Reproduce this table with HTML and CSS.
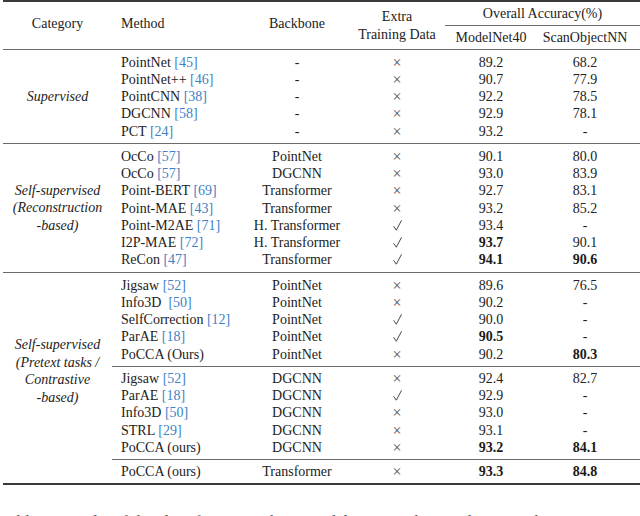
FILE: index.html
```html
<!DOCTYPE html>
<html>
<head>
<meta charset="utf-8">
<link rel="stylesheet" href="styles.css">
</head>
<body>
<table class="results">
  <colgroup>
    <col class="c-cat"><col class="c-method"><col class="c-bb"><col class="c-extra"><col class="c-mn"><col class="c-so">
  </colgroup>
  <thead>
    <tr class="h1">
      <th rowspan="2" class="top bot hi">Category</th>
      <th rowspan="2" class="top bot left hi">Method</th>
      <th rowspan="2" class="top bot hi">Backbone</th>
      <th rowspan="2" class="top bot extra">Extra<br>Training Data</th>
      <th colspan="2" class="top cmid">Overall Accuracy(%)</th>
    </tr>
    <tr class="h2">
      <th class="bot">ModelNet40</th>
      <th class="bot so">ScanObjectNN</th>
    </tr>
  </thead>
  <tbody class="g g1">
    <tr class="first"><td rowspan="5" class="cat">Supervised</td><td class="left">PointNet <span class="ref">[45]</span></td><td>-</td><td class="x">×</td><td>89.2</td><td class="so">68.2</td></tr>
    <tr><td class="left">PointNet++ <span class="ref">[46]</span></td><td>-</td><td class="x">×</td><td>90.7</td><td class="so">77.9</td></tr>
    <tr><td class="left">PointCNN <span class="ref">[38]</span></td><td>-</td><td class="x">×</td><td>92.2</td><td class="so">78.5</td></tr>
    <tr><td class="left">DGCNN <span class="ref">[58]</span></td><td>-</td><td class="x">×</td><td>92.9</td><td class="so">78.1</td></tr>
    <tr class="last"><td class="left">PCT <span class="ref">[24]</span></td><td>-</td><td class="x">×</td><td>93.2</td><td class="so">-</td></tr>
  </tbody>
  <tbody class="g g2">
    <tr class="first"><td rowspan="7" class="cat">Self-supervised<br>(Reconstruction<br>-based)</td><td class="left">OcCo <span class="ref">[57]</span></td><td>PointNet</td><td class="x">×</td><td>90.1</td><td class="so">80.0</td></tr>
    <tr><td class="left">OcCo <span class="ref">[57]</span></td><td>DGCNN</td><td class="x">×</td><td>93.0</td><td class="so">83.9</td></tr>
    <tr><td class="left">Point-BERT <span class="ref">[69]</span></td><td>Transformer</td><td class="x">×</td><td>92.7</td><td class="so">83.1</td></tr>
    <tr><td class="left">Point-MAE <span class="ref">[43]</span></td><td>Transformer</td><td class="x">×</td><td>93.2</td><td class="so">85.2</td></tr>
    <tr><td class="left">Point-M2AE <span class="ref">[71]</span></td><td>H. Transformer</td><td class="ck"><svg class="tick" viewBox="0 0 9 11"><path d="M0.8 6.6 L3.3 10.2 L8.4 0.6"/></svg></td><td>93.4</td><td class="so">-</td></tr>
    <tr><td class="left">I2P-MAE <span class="ref">[72]</span></td><td>H. Transformer</td><td class="ck"><svg class="tick" viewBox="0 0 9 11"><path d="M0.8 6.6 L3.3 10.2 L8.4 0.6"/></svg></td><td><b>93.7</b></td><td class="so">90.1</td></tr>
    <tr class="last"><td class="left">ReCon <span class="ref">[47]</span></td><td>Transformer</td><td class="ck"><svg class="tick" viewBox="0 0 9 11"><path d="M0.8 6.6 L3.3 10.2 L8.4 0.6"/></svg></td><td><b>94.1</b></td><td class="so"><b>90.6</b></td></tr>
  </tbody>
  <tbody class="g g3">
    <tr class="first"><td rowspan="10" class="cat cat3">Self-supervised<br>(Pretext tasks /<br>Contrastive<br>-based)</td><td class="left">Jigsaw <span class="ref">[52]</span></td><td>PointNet</td><td class="x">×</td><td>89.6</td><td class="so">76.5</td></tr>
    <tr><td class="left">Info3D&nbsp; <span class="ref">[50]</span></td><td>PointNet</td><td class="x">×</td><td>90.2</td><td class="so">-</td></tr>
    <tr><td class="left">SelfCorrection <span class="ref">[12]</span></td><td>PointNet</td><td class="ck"><svg class="tick" viewBox="0 0 9 11"><path d="M0.8 6.6 L3.3 10.2 L8.4 0.6"/></svg></td><td>90.0</td><td class="so">-</td></tr>
    <tr><td class="left">ParAE <span class="ref">[18]</span></td><td>PointNet</td><td class="ck"><svg class="tick" viewBox="0 0 9 11"><path d="M0.8 6.6 L3.3 10.2 L8.4 0.6"/></svg></td><td><b>90.5</b></td><td class="so">-</td></tr>
    <tr class="last"><td class="left">PoCCA (Ours)</td><td>PointNet</td><td class="x">×</td><td>90.2</td><td class="so"><b>80.3</b></td></tr>
    <tr class="sub first"><td class="left">Jigsaw <span class="ref">[52]</span></td><td>DGCNN</td><td class="x">×</td><td>92.4</td><td class="so">82.7</td></tr>
    <tr><td class="left">ParAE <span class="ref">[18]</span></td><td>DGCNN</td><td class="ck"><svg class="tick" viewBox="0 0 9 11"><path d="M0.8 6.6 L3.3 10.2 L8.4 0.6"/></svg></td><td>92.9</td><td class="so">-</td></tr>
    <tr><td class="left">Info3D <span class="ref">[50]</span></td><td>DGCNN</td><td class="x">×</td><td>93.0</td><td class="so">-</td></tr>
    <tr><td class="left">STRL <span class="ref">[29]</span></td><td>DGCNN</td><td class="x">×</td><td>93.1</td><td class="so">-</td></tr>
    <tr class="last"><td class="left">PoCCA (ours)</td><td>DGCNN</td><td class="x">×</td><td><b>93.2</b></td><td class="so"><b>84.1</b></td></tr>
    <tr class="sub final"><td class="blank"></td><td class="left">PoCCA (ours)</td><td>Transformer</td><td class="x">×</td><td><b>93.3</b></td><td class="so"><b>84.8</b></td></tr>
  </tbody>
</table>
<p class="caption">Table 2: Results of the classification task on ModelNet40 and ScanObjectNN datasets.</p>
</body>
</html>
```
FILE: styles.css
```css
html, body {
  margin: 0;
  padding: 0;
  background: #fff;
  overflow: hidden;
}
body {
  font-family: "Liberation Serif", "Times New Roman", serif;
  font-size: 14px;
  color: #222;
  width: 640px;
  height: 516px;
}
.results {
  border-collapse: separate;
  border-spacing: 0;
  table-layout: fixed;
  width: 637px;
  margin-left: 3px;
}
.c-cat { width: 109px; }
.c-method { width: 133px; }
.c-bb { width: 104px; }
.c-extra { width: 96px; }
.c-mn { width: 92px; }
.c-so { width: 103px; }

th, td {
  padding: 0;
  text-align: center;
  vertical-align: middle;
  white-space: nowrap;
}
th {
  font-weight: normal;
  line-height: 18px;
}
th.top { border-top: 2px solid #3a3a3a; }
th.bot { border-bottom: 1px solid #6a6a6a; }
th.hi { padding-bottom: 4px; }
th.cmid { border-bottom: 1px solid #6a6a6a; height: 23px; }
.h2 th { height: 23px; }
th.extra { padding-top: 1px; }
.left { text-align: left; padding-left: 9px; }
.so { padding-right: 7px; }

td { line-height: 17.25px; }
.g .first td { padding-top: 3.5px; }
.g .last td { padding-bottom: 3.5px; }
.g td.cat { padding-top: 0; padding-bottom: 0; line-height: 17.4px; font-style: italic; }
.g1 td.cat { padding-top: 1px; }
.g2 .first td, .g3 > tr.first:first-child td { border-top: 1px solid #6a6a6a; }
.g3 td.cat3 { border-top: 1px solid #6a6a6a; padding-top: 11px; }
.g3 .sub td { border-top: 1px solid #6a6a6a; }
.g3 .sub.first td { padding-top: 2.5px; }
.g3 .sub.first ~ .last td { padding-bottom: 2.5px; }
.g3 .final td { padding-top: 3px; padding-bottom: 3px; border-bottom: 2px solid #3a3a3a; }
.g3 .final td.blank { border-top: none; }

.ref { color: #3f7fc6; }
b { font-weight: bold; color: #1a1a1a; }
.x { color: #555; font-size: 16px; }
.ck { line-height: 0; }
.tick {
  display: inline-block;
  width: 9px;
  height: 11px;
  vertical-align: -1px;
  fill: none;
  stroke: #333;
  stroke-width: 0.9;
  stroke-linecap: round;
  stroke-linejoin: round;
}

.caption {
  margin: 27px 0 0 0;
  font-size: 17px;
  line-height: 20px;
  color: #555;
  white-space: nowrap;
}
```
